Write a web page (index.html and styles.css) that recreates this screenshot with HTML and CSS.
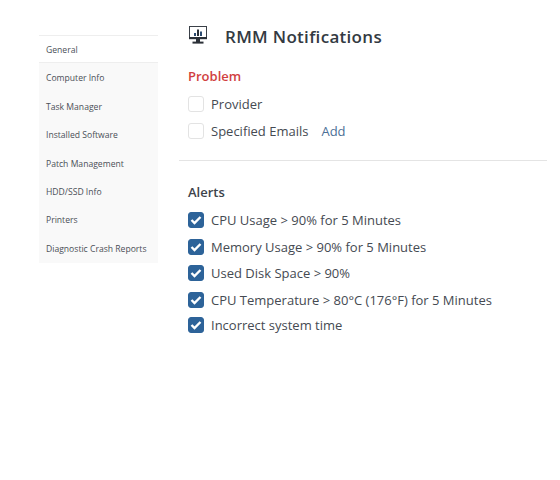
FILE: index.html
```html
<!DOCTYPE html>
<html lang="en">
<head>
    <meta charset="UTF-8">
    <meta name="viewport" content="width=device-width, initial-scale=1.0">
    <title>RMM Notifications</title>
    <link rel="stylesheet" href="styles.css">
</head>
<body>

    <div class="page">
        <div class="sidebar">
            <a class="side-item active">General</a>
            <a class="side-item">Computer Info</a>
            <a class="side-item">Task Manager</a>
            <a class="side-item">Installed Software</a>
            <a class="side-item">Patch Management</a>
            <a class="side-item">HDD/SSD Info</a>
            <a class="side-item">Printers</a>
            <a class="side-item">Diagnostic Crash Reports</a>
        </div>

        <div class="content">
            <div class="header">
                <svg class="header-icon" width="20" height="18" viewBox="0 0 20 18">
                    <rect x="1.5" y="0.5" width="17" height="12" fill="none" stroke="#3a4048" stroke-width="1"/>
                    <rect x="1" y="11" width="18" height="2.2" fill="#2b3038"/>
                    <rect x="6" y="7" width="2" height="3" fill="#2b4a70"/>
                    <rect x="9" y="3.5" width="2" height="6.5" fill="#2b3038"/>
                    <rect x="12" y="5.5" width="2" height="4.5" fill="#2b4a70"/>
                    <rect x="8" y="13" width="4" height="3" fill="#2b3038"/>
                    <rect x="4.5" y="15.6" width="11" height="2" fill="#2b3038"/>
                </svg>
                <h1>RMM Notifications</h1>
            </div>

            <div class="section section-problem">
                <h2 class="problem">Problem</h2>
                <div class="check-row"><span class="box"></span>Provider</div>
                <div class="check-row"><span class="box"></span>Specified Emails<a class="add">Add</a></div>
            </div>

            <div class="section section-alerts">
                <h2>Alerts</h2>
                <div class="check-row"><span class="box checked"><svg width="12" height="10" viewBox="0 0 12 10"><path d="M1.5 5 L4.5 8 L10.5 2" fill="none" stroke="#fff" stroke-width="2.4"/></svg></span>CPU Usage &gt; 90% for 5 Minutes</div>
                <div class="check-row"><span class="box checked"><svg width="12" height="10" viewBox="0 0 12 10"><path d="M1.5 5 L4.5 8 L10.5 2" fill="none" stroke="#fff" stroke-width="2.4"/></svg></span>Memory Usage &gt; 90% for 5 Minutes</div>
                <div class="check-row"><span class="box checked"><svg width="12" height="10" viewBox="0 0 12 10"><path d="M1.5 5 L4.5 8 L10.5 2" fill="none" stroke="#fff" stroke-width="2.4"/></svg></span>Used Disk Space &gt; 90%</div>
                <div class="check-row"><span class="box checked"><svg width="12" height="10" viewBox="0 0 12 10"><path d="M1.5 5 L4.5 8 L10.5 2" fill="none" stroke="#fff" stroke-width="2.4"/></svg></span>CPU Temperature &gt; 80°C (176°F) for 5 Minutes</div>
                <div class="check-row last"><span class="box checked"><svg width="12" height="10" viewBox="0 0 12 10"><path d="M1.5 5 L4.5 8 L10.5 2" fill="none" stroke="#fff" stroke-width="2.4"/></svg></span>Incorrect system time</div>
            </div>
        </div>
    </div>

</body>
</html>
```

FILE: styles.css
```css
body {
    margin: 0;
    font-family: "Open Sans", sans-serif;
    color: #454a52;
    background-color: white;
}

.page {
    display: flex;
    align-items: flex-start;
    width: 547px;
}

.sidebar {
    width: 119px;
    margin-left: 39px;
    margin-top: 35px;
    margin-right: 21px;
    padding-bottom: 1px;
    background-color: #f9f9f9;
    flex-shrink: 0;
}

.side-item {
    display: flex;
    align-items: center;
    box-sizing: border-box;
    height: 28.45px;
    padding-left: 7px;
    padding-top: 2px;
    font-size: 8.6px;
    color: #4a4f57;
}

.active {
    background-color: white;
    border-top: 1px solid #eeeeee;
    border-bottom: 1px solid #eeeeee;
    height: 28px;
}

.content {
    flex: 1;
}

.header {
    display: flex;
    align-items: center;
    height: 32px;
    margin-top: 20px;
    padding-left: 9px;
}

.header-icon {
    margin-right: 17px;
    margin-top: -3px;
}

h1 {
    margin: 0;
    font-size: 17px;
    font-weight: 600;
    letter-spacing: 0.3px;
    color: #333a42;
}

h2 {
    margin: 0 0 6px 0;
    font-size: 13px;
    font-weight: 600;
    color: #3d434b;
}

.problem {
    color: #d13f3f;
}

.section {
    padding-left: 9px;
}

.section-problem {
    padding-top: 15px;
    padding-bottom: 15.8px;
    border-bottom: 1px solid #e4e4e4;
}

.section-alerts {
    padding-top: 22px;
}

.check-row {
    display: flex;
    align-items: center;
    height: 26.6px;
    font-size: 13px;
}

.last {
    height: 23.4px;
}

.box {
    display: flex;
    align-items: center;
    justify-content: center;
    box-sizing: border-box;
    width: 16px;
    height: 16px;
    margin-right: 7px;
    border: 1px solid #e3e3e3;
    border-radius: 3px;
}

.checked {
    background-color: #2d6399;
    border-color: #2d6399;
}

.add {
    margin-left: 13px;
    color: #4c6f96;
}
```
